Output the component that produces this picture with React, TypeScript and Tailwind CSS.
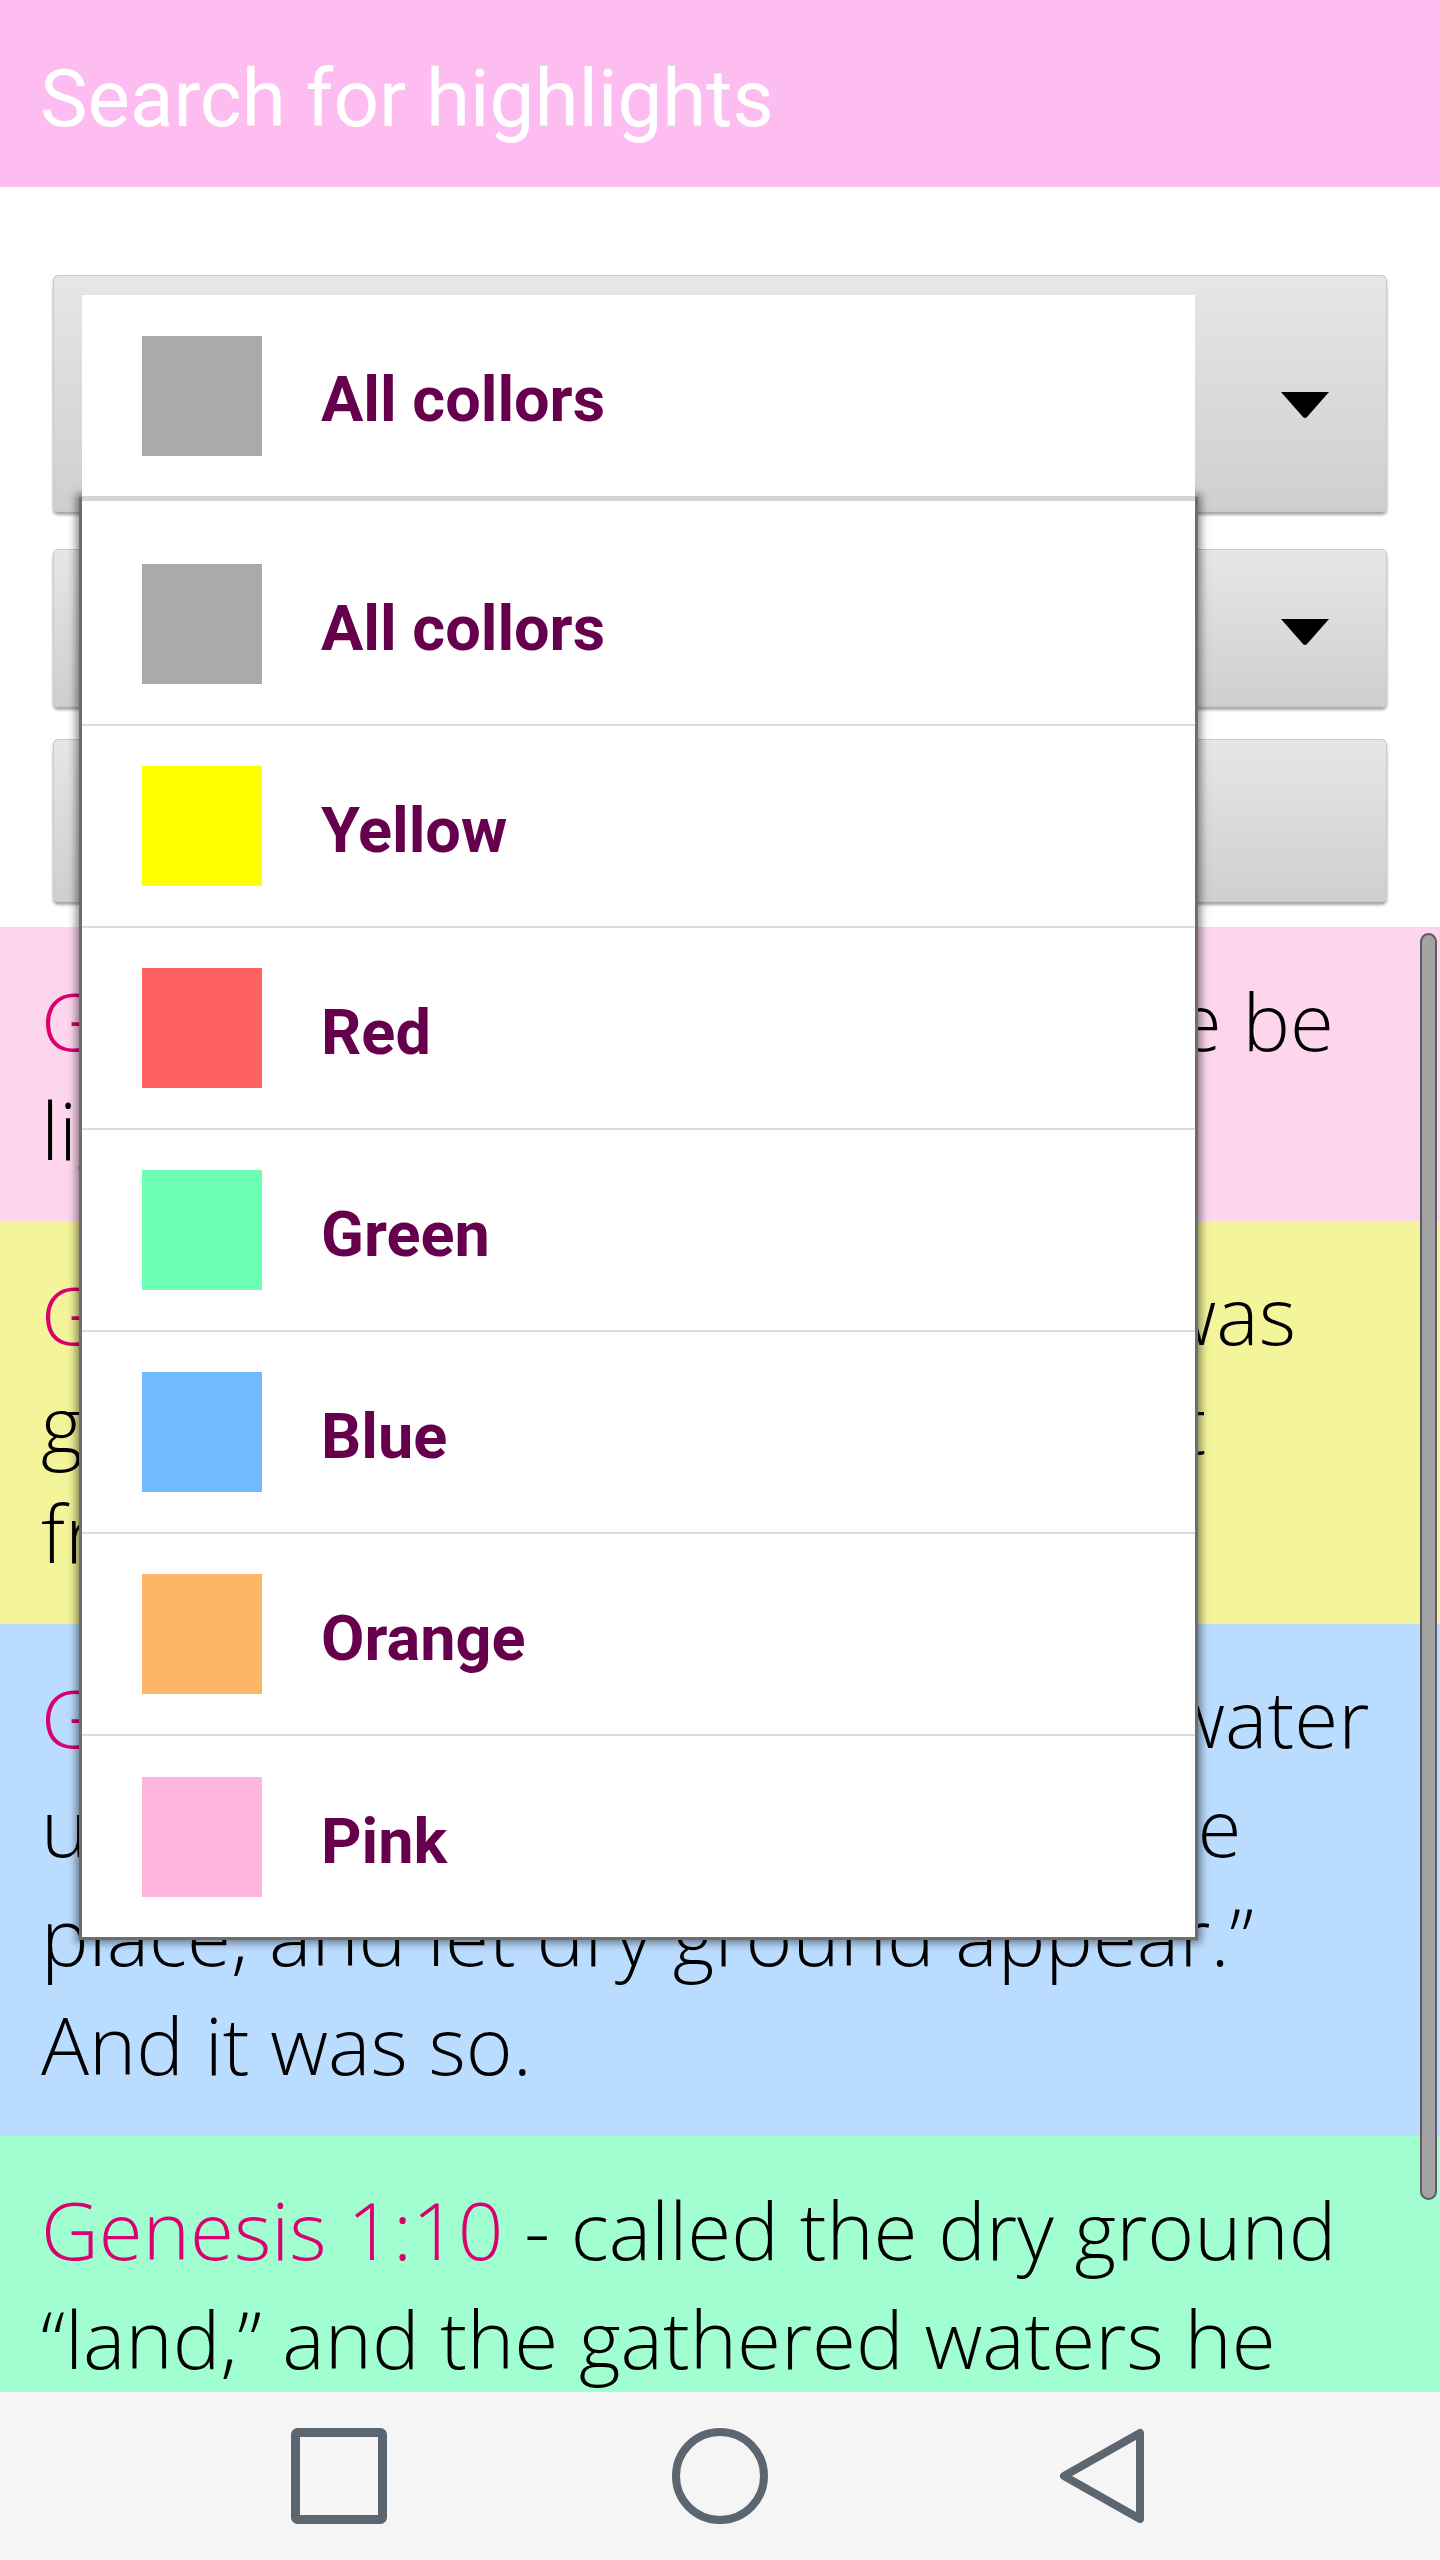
import React from "react";

type ColorOption = { name: string; swatch: string };

const colorOptions: ColorOption[] = [
  { name: "All collors", swatch: "bg-[#aaaaaa]" },
  { name: "Yellow", swatch: "bg-[#ffff00]" },
  { name: "Red", swatch: "bg-[#ff6161]" },
  { name: "Green", swatch: "bg-[#6dffb6]" },
  { name: "Blue", swatch: "bg-[#72b9ff]" },
  { name: "Orange", swatch: "bg-[#ffb566]" },
  { name: "Pink", swatch: "bg-[#ffb5de]" },
];

type Highlight = { verse: string; text: string; bg: string };

const highlights: Highlight[] = [
  {
    verse: "Genesis 1:3",
    text: " - And said, \u201cLet there be light,\u201d and there was light.",
    bg: "bg-[#fdd6ee]",
  },
  {
    verse: "Genesis 1:4",
    text: " - saw that the light was good, and he separated the light from the darkness.",
    bg: "bg-[#f4f49a]",
  },
  {
    verse: "Genesis 1:9",
    text: " - And said, \u201cLet the water under the sky be gathered to one place, and let dry ground appear.\u201d And it was so.",
    bg: "bg-[#badcfe]",
  },
  {
    verse: "Genesis 1:10",
    text: " - called the dry ground \u201cland,\u201d and the gathered waters he called \u201cseas.\u201d And saw that it was good.",
    bg: "bg-[#a0fed0]",
  },
];

function Caret() {
  return (
    <svg width="48" height="27" viewBox="0 0 48 27">
      <path d="M0 0 H48 L26 25 Q24 27 22 25 Z" fill="#000" />
    </svg>
  );
}

function OptionLabel({ option }: { option: ColorOption }) {
  return (
    <div className="flex items-center gap-[59px] pl-[60px]">
      <div className={`w-[120px] h-[120px] shrink-0 ${option.swatch}`} />
      <span className="pt-[10px] text-[63px] font-bold text-[#66004c] [font-family:Roboto,'Liberation_Sans',sans-serif]">
        {option.name}
      </span>
    </div>
  );
}

const spinnerShell =
  "mx-[53px] rounded-[5px] border border-[#c9c9c9] bg-gradient-to-b from-[#e6e6e6] to-[#cfcfcf] shadow-[0_3px_3px_rgba(0,0,0,0.35)]";

export default function App() {
  return (
    <div className="relative w-[1440px] h-[2560px] overflow-hidden bg-white flex flex-col">
      {/* app bar */}
      <header className="h-[187px] shrink-0 bg-[#febdf0] flex items-center pl-[40px] pt-[10px]">
        <h1 className="text-[80px] text-white font-normal [font-family:Roboto,'Liberation_Sans',sans-serif]">
          Search for highlights
        </h1>
      </header>

      {/* filters */}
      <div className="shrink-0 h-[740px] pt-[88px] flex flex-col">
        <div className={`${spinnerShell} h-[237px] flex items-start pt-[19px]`}>
          <div className="relative z-20 ml-[28px] w-[1113px] h-[206px] bg-white border-b-[5px] border-[#d4d4d4] flex items-center">
            <OptionLabel option={colorOptions[0]} />
          </div>
          <div className="flex-1 h-[206px] flex items-center justify-end pr-[57px] pt-[14px]">
            <Caret />
          </div>
        </div>

        <div className={`${spinnerShell} mt-[37px] h-[158px] flex items-center justify-end pr-[57px] pt-[8px]`}>
          <Caret />
        </div>

        <div className={`${spinnerShell} mt-[32px] h-[163px]`} />
      </div>

      {/* highlight list */}
      <div className="relative flex-1 overflow-hidden">
        {highlights.map((h) => (
          <div
            key={h.verse}
            className={`${h.bg} pl-[41px] pr-[55px] py-[38px] text-[80px] leading-[109px] font-light text-black [font-family:'Open_Sans','Noto_Sans',sans-serif]`}
          >
            <span className="text-[#db0070]">{h.verse}</span>
            {h.text}
          </div>
        ))}
        <div className="absolute right-[3px] top-[6px] w-[17px] h-[1267px] rounded-full bg-[#a3a3a3] border-2 border-[#5f5a63]" />
      </div>

      {/* navigation bar */}
      <nav className="h-[168px] shrink-0 bg-[#f5f5f5] flex items-center justify-center gap-[285px]">
        <svg width="96" height="96" viewBox="0 0 96 96" fill="none" stroke="#5b6670">
          <rect x="4.5" y="4.5" width="87" height="87" rx="2" strokeWidth="9" />
        </svg>
        <svg width="96" height="96" viewBox="0 0 96 96" fill="none" stroke="#5b6670">
          <circle cx="48" cy="48" r="44" strokeWidth="8" />
        </svg>
        <svg width="96" height="96" viewBox="0 0 96 96" fill="none" stroke="#5b6670">
          <path d="M87 5 V91 L11 48 Z" strokeWidth="8" strokeLinejoin="round" />
        </svg>
      </nav>

      {/* open dropdown of the colour spinner */}
      <div className="absolute z-10 left-[82px] top-[500px] w-[1113px] h-[1437px] bg-white pt-[24px] shadow-[0_0_0_3px_#6e6e6e,0_0_8px_6px_rgba(0,0,0,0.45)]">
        {colorOptions.map((option, i) => (
          <div
            key={option.name}
            className={`h-[202px] flex items-center ${
              i < colorOptions.length - 1 ? "border-b-2 border-[#dcdcdc]" : ""
            }`}
          >
            <OptionLabel option={option} />
          </div>
        ))}
      </div>
    </div>
  );
}
